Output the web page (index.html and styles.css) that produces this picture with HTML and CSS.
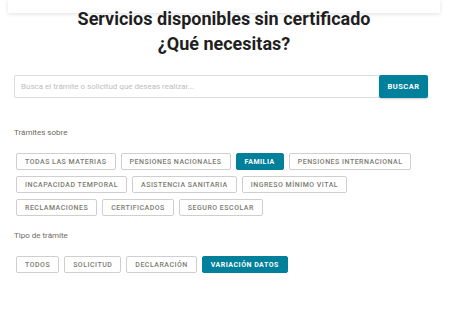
FILE: index.html
```html
<!DOCTYPE html>
<html lang="es">
<head>
<meta charset="utf-8">
<link rel="stylesheet" href="styles.css">
</head>
<body>
<div class="topcard"></div>
<main class="page">
  <h1 class="title">Servicios disponibles sin certificado<br>¿Qué necesitas?</h1>
  <form class="search">
    <input class="search-input" type="text" placeholder="Busca el trámite o solicitud que deseas realizar...">
    <button class="search-btn" type="button">BUSCAR</button>
  </form>
  <p class="label label-first">Trámites sobre</p>
  <div class="chips">
    <span class="chip">TODAS LAS MATERIAS</span>
    <span class="chip">PENSIONES NACIONALES</span>
    <span class="chip active">FAMILIA</span>
    <span class="chip">PENSIONES INTERNACIONAL</span>
    <span class="chip">INCAPACIDAD TEMPORAL</span>
    <span class="chip">ASISTENCIA SANITARIA</span>
    <span class="chip">INGRESO MÍNIMO VITAL</span>
    <span class="chip">RECLAMACIONES</span>
    <span class="chip">CERTIFICADOS</span>
    <span class="chip">SEGURO ESCOLAR</span>
  </div>
  <p class="label">Tipo de trámite</p>
  <div class="chips">
    <span class="chip">TODOS</span>
    <span class="chip">SOLICITUD</span>
    <span class="chip">DECLARACIÓN</span>
    <span class="chip active">VARIACIÓN DATOS</span>
  </div>
</main>
</body>
</html>
```
FILE: styles.css
```css
* { box-sizing: border-box; }
html, body { margin: 0; padding: 0; background: #fff; }
body { font-family: Roboto, "Liberation Sans", sans-serif; color: #222; width: 460px; height: 311px; overflow: hidden; }
.topcard {
  margin: 0 20px 0 8px;
  height: 13px;
  background: #fff;
  box-shadow: 0 1px 4px rgba(0,0,0,0.12);
}
.page { padding: 0 32px 0 14px; }
.title {
  margin: -7px 0 0;
  text-align: center;
  font-size: 18px;
  line-height: 25px;
  font-weight: 700;
  color: #1f1f1f;
  padding-left: 6px;
}
.search { display: flex; margin-top: 19px; height: 23px; }
.search-input {
  flex: 1;
  border: 1px solid #ddd;
  border-right: none;
  border-radius: 2px 0 0 2px;
  padding: 0 6px;
  font-family: Roboto, sans-serif;
  font-size: 8px;
  color: #333;
  outline: none;
}
.search-input::placeholder { color: #bdbdbd; }
.search-btn {
  width: 49px;
  border: none;
  background: #00809b;
  color: #fff;
  font-family: Roboto, sans-serif;
  font-weight: 700;
  font-size: 7.5px;
  letter-spacing: 0.5px;
  border-radius: 2px;
  box-shadow: 0 1px 2px rgba(0,0,0,0.2);
}
.label {
  margin: 0;
  font-size: 8px;
  line-height: 12px;
  color: #6e6a5e;
  margin-top: 14px;
}
.label-first { margin-top: 29px; }
.chips {
  display: flex;
  flex-wrap: wrap;
  gap: 6px 5px;
  margin-top: 14px;
  padding-left: 2px;
}
.chip {
  display: inline-flex;
  align-items: center;
  height: 17px;
  padding: 0 8px;
  border: 1px solid #cfcfcf;
  border-radius: 2px;
  font-size: 7px;
  font-weight: 500;
  letter-spacing: 0.5px;
  color: #7b7b72;
  background: #fff;
}
.chip.active {
  background: #00809b;
  border-color: #00809b;
  color: #fff;
  font-weight: 700;
}
```
